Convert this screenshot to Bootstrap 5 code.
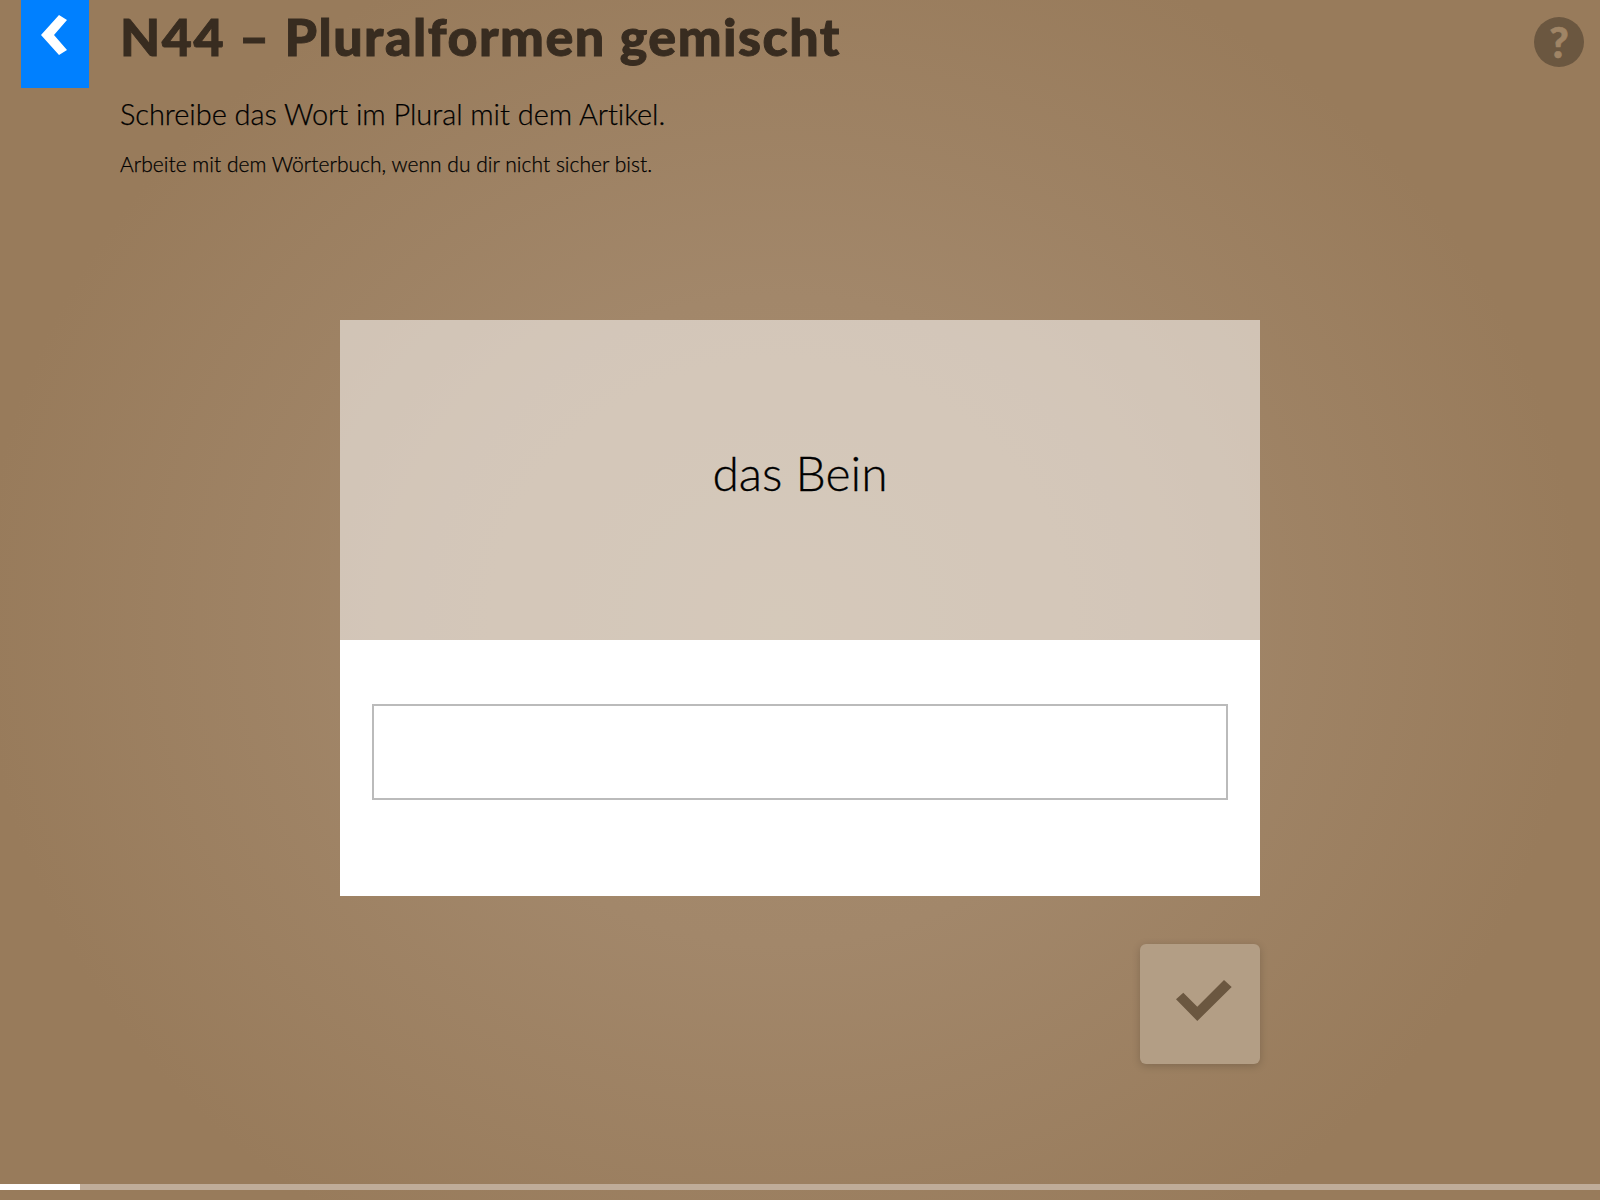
<!DOCTYPE html>
<html lang="de">
<head>
    <meta charset="UTF-8">
    <title>N44 – Pluralformen gemischt</title>
    <link href="https://cdn.jsdelivr.net/npm/bootstrap@5.3.0/dist/css/bootstrap.min.css" rel="stylesheet">
    <style>
        body {
            font-family: Lato, "Liberation Sans", sans-serif;
            height: 1200px;
            overflow: hidden;
            color: #000;
            background: radial-gradient(ellipse 800px 720px at 780px 620px, #a78c6d 0%, #a2876a 45%, #987b5b 100%);
        }
        .page-wrap { height: 1200px; }
        .back-btn {
            width: 68px;
            height: 88px;
            margin-left: 21px;
            background: #0080ff;
        }
        .back-btn svg { display: block; }
        .head-text { margin-left: 31px; }
        .task-title {
            font-size: 52px;
            line-height: 72px;
            font-weight: 900;
            letter-spacing: 1.5px;
            -webkit-text-stroke: .9px #382c20;
            color: #382c20;
            margin: 0;
        }
        .task-main {
            font-size: 29px;
            font-weight: 300;
            letter-spacing: -.05px;
            line-height: 40px;
            margin: 22px 0 0;
            -webkit-text-stroke: .25px #000;
        }
        .task-sub {
            font-size: 21px;
            font-weight: 300;
            letter-spacing: .03px;
            line-height: 30px;
            margin: 15px 0 0;
            -webkit-text-stroke: .25px #000;
        }
        .help-btn {
            width: 50px;
            height: 50px;
            margin: 17px 16px 0 0;
            background: #6b5740;
            color: #a08566;
            font-size: 42px;
            font-weight: 900;
            line-height: 50px;
            -webkit-text-stroke: .6px #a08566;
        }
        .task-panel { width: 920px; margin-top: 141px; }
        .word-box {
            height: 320px;
            padding-bottom: 14px;
            background: rgba(255, 255, 255, .53);
            font-size: 48px;
            font-weight: 300;
            -webkit-text-stroke: .3px #000;
        }
        .answer-box { height: 256px; padding: 64px 32px 0; background: #fff; }
        .answer-box .form-control {
            height: 96px;
            border: 2px solid #bbb;
            border-radius: 0;
        }
        .check-btn {
            width: 120px;
            height: 120px;
            margin-top: 48px;
            padding: 0 0 8px 8px;
            background: #b39e85;
            border: 0;
            border-radius: 6px;
            box-shadow: 0 2px 8px rgba(0, 0, 0, .18);
        }
        .progress-track {
            height: 6px;
            margin-bottom: 10px;
            background: #bfac99;
            border-radius: 0;
        }
        .progress-track .progress-bar { background: #fff; }
    </style>
</head>
<body>
<div class="page-wrap d-flex flex-column">
    <div class="d-flex align-items-start">
        <a href="#" class="back-btn d-block flex-shrink-0">
            <svg width="68" height="88" viewBox="0 0 68 88"><polygon points="20,35 38,15 46,20 33,35 46,50 38,55" fill="#fff"/></svg>
        </a>
        <div class="head-text flex-grow-1">
            <h1 class="task-title">N44 – Pluralformen gemischt</h1>
            <p class="task-main">Schreibe das Wort im Plural mit dem Artikel.</p>
            <p class="task-sub">Arbeite mit dem Wörterbuch, wenn du dir nicht sicher bist.</p>
        </div>
        <div class="help-btn rounded-circle text-center flex-shrink-0">?</div>
    </div>

    <div class="task-panel mx-auto">
        <div class="word-box d-flex align-items-center justify-content-center">das Bein</div>
        <div class="answer-box">
            <input type="text" class="form-control">
        </div>
        <div class="d-flex justify-content-end">
            <button class="check-btn d-flex align-items-center justify-content-center">
                <svg width="56" height="41" viewBox="0 0 56 41"><polygon points="0,19.3 7.3,12.7 21.3,26.7 48,0 55.7,7 21.3,41" fill="#6b5740"/></svg>
            </button>
        </div>
    </div>

    <div class="progress progress-track mt-auto">
        <div class="progress-bar" style="width: 5%"></div>
    </div>
</div>
<script src="https://cdn.jsdelivr.net/npm/bootstrap@5.3.0/dist/js/bootstrap.bundle.min.js"></script>
</body>
</html>
